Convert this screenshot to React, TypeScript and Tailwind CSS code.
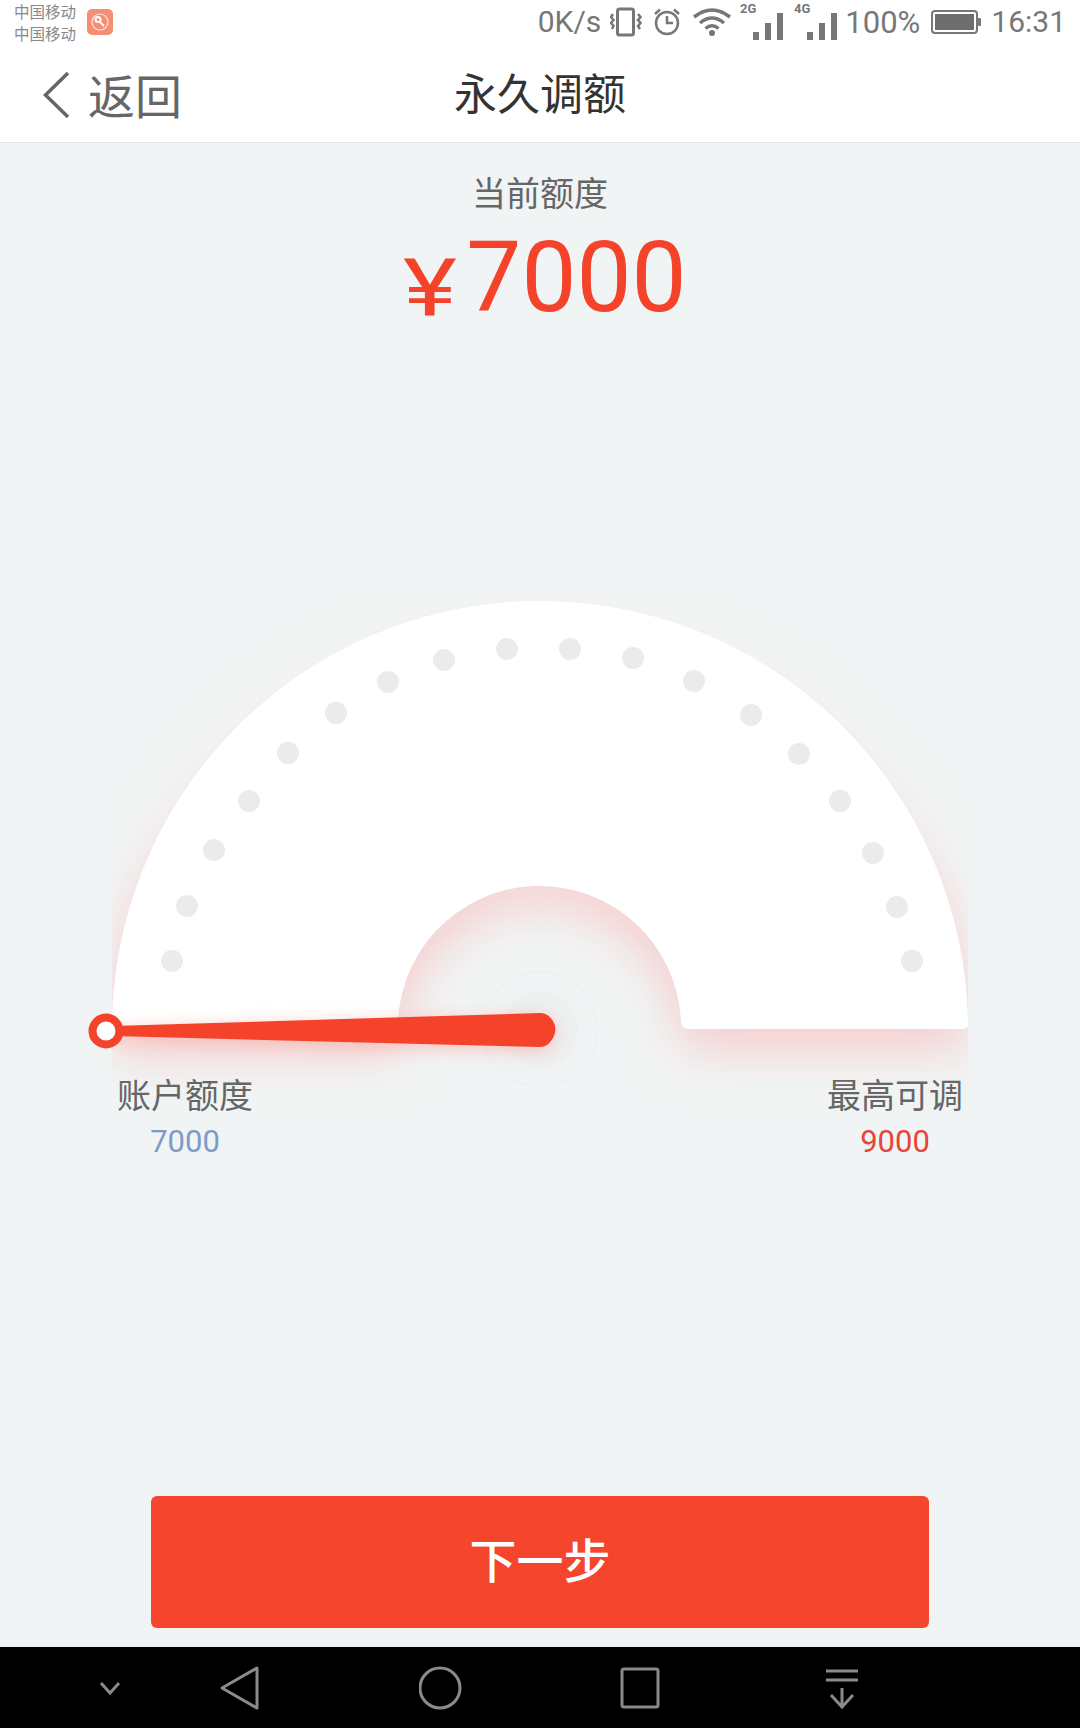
import React from "react";

const dots: [number, number][] = [
  [172, 960], [187, 905], [214, 849], [249, 800], [288, 752], [336, 712],
  [388, 681], [444, 659], [507, 648], [570, 648], [633, 657], [694, 680],
  [751, 714], [799, 753], [840, 800], [873, 852], [897, 906], [912, 960],
];

const annulus =
  "M112 1032 A428 428 0 0 1 968 1024 Q968 1028 960 1028 L689 1028 Q681.5 1028 681 1021 A141.6 141.6 0 0 0 398 1032 Z";

const needle = "M112 1025 L540 1012 Q548 1012 553 1020 Q558 1028 553 1037 Q548 1046 540 1046 L112 1035 Z";

const Gauge = () => (
  <svg viewBox="0 590 1080 485" className="block w-[1080px] h-[485px] overflow-visible">
    <defs>
      <filter id="glow" x="-10%" y="-10%" width="120%" height="130%">
        <feGaussianBlur stdDeviation="24" />
      </filter>
      <filter id="needleGlow" x="-10%" y="-100%" width="120%" height="400%">
        <feGaussianBlur stdDeviation="9" />
      </filter>
      <clipPath id="glowClip">
        <rect x="112" y="590" width="856" height="560" />
      </clipPath>
      <linearGradient id="glowFill" gradientUnits="userSpaceOnUse" x1="0" y1="640" x2="0" y2="890">
        <stop offset="0" stopColor="#f7ecdf" stopOpacity="0.35" />
        <stop offset="1" stopColor="#f6cdce" />
      </linearGradient>
    </defs>

    <g clipPath="url(#glowClip)">
      <path d={annulus} transform="translate(0 20)" fill="url(#glowFill)" filter="url(#glow)" />
    </g>
    <path d={annulus} fill="#ffffff" />

    <circle cx="540" cy="1028" r="58" fill="#f0f3f3" stroke="#ebefef" strokeWidth="1" />
    <circle cx="540" cy="1028" r="38" fill="#edf0f0" />

    {dots.map(([cx, cy]) => (
      <circle key={cx} cx={cx} cy={cy} r="11" fill="#ebecea" />
    ))}

    <path d={needle} fill="#f7b1a6" fillOpacity="0.7" filter="url(#needleGlow)" transform="translate(0 4)" />
    <path d={needle} fill="#f5432b" />
    <circle cx="106" cy="1030" r="13.5" fill="#ffffff" stroke="#f5432b" strokeWidth="8" />
  </svg>
);

const Signal = ({ label }: { label: string }) => (
  <svg viewBox="0 0 43 40" className="w-[43px] h-[40px]">
    <text x="0" y="11" fontSize="13" fontWeight="700" fill="#777">{label}</text>
    <rect x="13" y="30" width="6" height="8" fill="#777" />
    <rect x="25" y="21" width="6" height="17" fill="#777" />
    <rect x="37" y="11" width="6" height="27" fill="#777" />
  </svg>
);

const StatusBar = () => (
  <div className="flex items-start h-[56px] bg-white text-[#777]">
    <div className="w-[73px] ml-[14px] mt-[2px] text-[15.5px] leading-[22px] text-[#888] whitespace-nowrap">
      <div>中国移动</div>
      <div>中国移动</div>
    </div>
    <div className="flex items-center justify-center w-[26px] h-[26px] mt-[9px] rounded-[5px] bg-[#f58e72]">
      <svg viewBox="0 0 26 26" className="w-[26px] h-[26px]" fill="none" stroke="#fff">
        <circle cx="13" cy="13" r="8" strokeWidth="1.2" strokeOpacity="0.8" />
        <circle cx="11" cy="10.5" r="2.5" strokeWidth="2" />
        <path d="M12.5 12.5 L17 17" strokeWidth="2" />
      </svg>
    </div>
    <div className="flex items-center ml-auto h-[44px] text-[30px] leading-none whitespace-nowrap">
      <span>0K/s</span>
      <svg viewBox="0 0 32 30" className="w-[32px] h-[30px] ml-[9px]" fill="none" stroke="#777" strokeWidth="3">
        <rect x="7.5" y="2" width="16" height="26" rx="2" />
        <path d="M3 7 L1 10 L3.5 13 L1 16 L3.5 19 L2 22 M28 7 L30.5 10 L28 13 L30.5 16 L28 19 L30 22" strokeWidth="2.5" />
      </svg>
      <svg viewBox="0 0 28 30" className="w-[28px] h-[30px] ml-[11px]" fill="none" stroke="#777" strokeWidth="2.5">
        <circle cx="14" cy="16" r="11" />
        <path d="M14 9 V16 H20 M2 7 L7 2.5 M26 7 L21 2.5" />
      </svg>
      <svg viewBox="0 0 40 30" className="w-[40px] h-[30px] ml-[11px]" fill="none" stroke="#777" strokeWidth="3.5">
        <path d="M2 10 Q20 -4 38 10 M8 16 Q20 6 32 16 M13.5 21.5 Q20 16 26.5 21.5" />
        <circle cx="20" cy="26" r="3" fill="#777" stroke="none" />
      </svg>
      <div className="ml-[8px]"><Signal label="2G" /></div>
      <div className="ml-[11px]"><Signal label="4G" /></div>
      <span className="ml-[8px] text-[31px]">100%</span>
      <svg viewBox="0 0 50 24" className="w-[50px] h-[24px] ml-[11px]">
        <rect x="1" y="1" width="45" height="22" rx="3" fill="none" stroke="#777" strokeWidth="2" />
        <rect x="4" y="4" width="39" height="16" fill="#6e6e6e" />
        <rect x="47" y="8" width="3" height="8" rx="1" fill="#777" />
      </svg>
      <span className="ml-[10px] mr-[14px]">16:31</span>
    </div>
  </div>
);

const Header = () => (
  <div className="grid grid-cols-[1fr_auto_1fr] items-center h-[87px] bg-white border-b border-[#e3e5e5]">
    <div className="flex items-center pl-[43px] text-[#666]">
      <svg viewBox="0 0 27 46" className="w-[27px] h-[46px] mb-[9px]" fill="none" stroke="#666" strokeWidth="3.5">
        <path d="M25 1 L2.5 23 L25 45" />
      </svg>
      <span className="ml-[18px] text-[47px] leading-none mb-[4px]">返回</span>
    </div>
    <div className="text-[43px] leading-none text-[#333] mb-[8px]">永久调额</div>
    <div />
  </div>
);

const NavBar = () => (
  <div className="flex items-center h-[81px] pl-[88px] bg-black">
    <svg viewBox="0 0 44 44" className="w-[44px] h-[44px]" fill="none" stroke="#8a8a8a" strokeWidth="3">
      <path d="M13 17 L22 27 L31 17" />
    </svg>
    <svg viewBox="0 0 44 44" className="w-[44px] h-[44px] ml-[86px]" fill="none" stroke="#8a8a8a" strokeWidth="3" strokeLinejoin="round">
      <path d="M39 2 L4 22 L39 42 Z" />
    </svg>
    <svg viewBox="0 0 44 44" className="w-[44px] h-[44px] ml-[157px]" fill="none" stroke="#8a8a8a" strokeWidth="3">
      <circle cx="21" cy="22" r="20" />
    </svg>
    <svg viewBox="0 0 44 44" className="w-[44px] h-[44px] ml-[156px]" fill="none" stroke="#8a8a8a" strokeWidth="3">
      <rect x="3" y="3" width="36" height="38" rx="2" />
    </svg>
    <svg viewBox="0 0 44 44" className="w-[44px] h-[44px] ml-[157px]" fill="none" stroke="#8a8a8a" strokeWidth="3">
      <path d="M6 5 H38 M6 14 H38 M22 22 V41 M11 29 L22 41 L33 29" />
    </svg>
  </div>
);

export default function App() {
  return (
    <div className="flex flex-col w-[1080px] h-[1728px] overflow-hidden bg-[#f1f4f4] [font-family:Roboto,'Noto_Sans_CJK_SC',sans-serif]">
      <StatusBar />
      <Header />
      <div className="flex flex-col flex-1">
        <div className="mt-[31px] text-center text-[34px] leading-[40px] text-[#666]">当前额度</div>
        <div className="flex items-baseline justify-center mt-[14px] pl-[10px] h-[100px] text-[#f5432b] leading-[100px]">
          <span className="inline-block w-[52px] text-[80px] origin-left scale-x-[1.28] translate-y-[5px]">¥</span>
          <span className="ml-[11px] text-[98px]">7000</span>
        </div>
        <div className="mt-[263px]">
          <Gauge />
        </div>
        <div className="flex justify-between px-[115px] text-center -mt-[2px]">
          <div className="w-[140px]">
            <div className="text-[34px] leading-[44px] text-[#666]">账户额度</div>
            <div className="mt-[2px] text-[31px] leading-[44px] text-[#7d9bc9]">7000</div>
          </div>
          <div className="w-[140px]">
            <div className="text-[34px] leading-[44px] text-[#666]">最高可调</div>
            <div className="mt-[2px] text-[31px] leading-[44px] text-[#e8453a]">9000</div>
          </div>
        </div>
        <div className="flex items-center justify-center w-[778px] h-[132px] mx-auto mt-auto mb-[19px] rounded-[6px] bg-[#f5452c] text-[47px] font-medium text-white">
          下一步
        </div>
      </div>
      <NavBar />
    </div>
  );
}
